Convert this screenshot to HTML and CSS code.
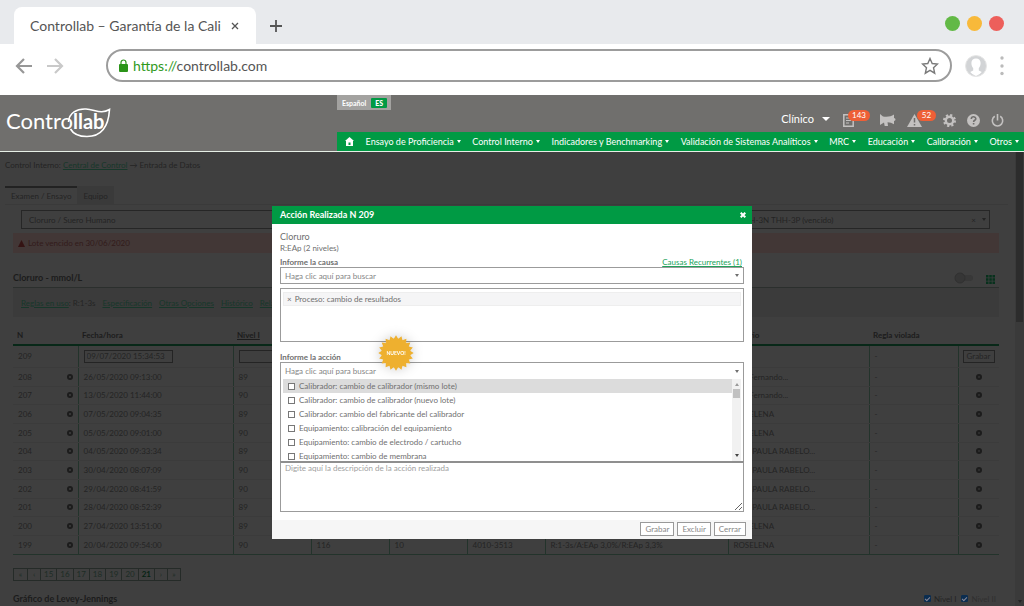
FILE: index.html
```html
<!DOCTYPE html>
<html lang="es">
<head>
<meta charset="utf-8">
<title>Controllab – Garantía de la Calidad</title>
<link rel="stylesheet" href="styles.css">
</head>
<body>
<div class="tabstrip">
  <div class="tab"><span>Controllab – Garantía de la Cali</span><button class="plain" aria-label="Cerrar pestaña"><svg width="8" height="8" viewBox="0 0 8 8"><path d="M1 1l6 6M7 1l-6 6" stroke="#555" stroke-width="1.3"/></svg></button></div>
  <button class="plain newtab" aria-label="Nueva pestaña"><svg width="12" height="12" viewBox="0 0 12 12"><path d="M6 0v12M0 6h12" stroke="#555" stroke-width="1.8"/></svg></button>
  <div class="lights"><i class="go"></i><i class="mid"></i><i class="stop"></i></div>
</div>
<div class="toolbar">
  <button class="plain" aria-label="Atrás"><svg width="17" height="16" viewBox="0 0 17 16"><path d="M9 1L2 8l7 7M2 8h15" fill="none" stroke="#979797" stroke-width="2.2"/></svg></button>
  <button class="plain" aria-label="Adelante"><svg width="17" height="16" viewBox="0 0 17 16"><path d="M8 1l7 7-7 7M15 8H0" fill="none" stroke="#c9c9c9" stroke-width="2.2"/></svg></button>
  <div class="address">
    <svg width="9" height="13" viewBox="0 0 9 13"><rect y="5" width="9" height="8" rx="1" fill="#2b9419"/><path d="M2 6V3.500a2.500 2.500 0 0 1 5 0V6" fill="none" stroke="#2b9419" stroke-width="1.200"/></svg>
    <span class="url"><b>https://</b>controllab.com</span>
    <svg width="18" height="18" viewBox="0 0 18 18"><path d="M9 1.500l2.200 5 5.300.5-4 3.700 1.200 5.500L9 13.400l-4.700 2.800 1.200-5.500-4-3.700 5.300-.5z" fill="none" stroke="#7a7a7a" stroke-width="1.400"/></svg>
  </div>
  <svg class="avatar" width="22" height="22" viewBox="0 0 22 22"><circle cx="11" cy="11" r="10.500" fill="#d2d4d6" stroke="#e6e6e6"/><path d="M11 3.500c3 0 4.600 2 4.600 4.600 0 2.500-.8 4-1.800 5v2.500l3 1.500A10 10 0 0 1 11 21a10 10 0 0 1-5.800-3.900l3-1.500v-2.500c-1-1-1.800-2.500-1.800-5C6.400 5.500 8 3.500 11 3.500z" fill="#fff"/></svg>
  <svg width="4" height="20" viewBox="0 0 4 20" fill="#bbb"><circle cx="2" cy="2" r="1.700"/><circle cx="2" cy="10" r="1.700"/><circle cx="2" cy="17.500" r="1.700"/></svg>
</div>

<header class="site">
  <svg class="logo" width="116" height="42" viewBox="0 101 116 42" role="img" aria-label="Controllab">
    <text x="6" y="129" class="logo-text">Contro<tspan class="logo-bold">llab</tspan></text>
    <path d="M68.500 122C69 113 77 108.500 86 109C95 109.500 101 114.500 109.500 109.500C108.500 126 102 136.500 87 136.500C79 136.500 73 133.500 70.500 129" fill="none" stroke="#fff" stroke-width="1.600"/>
  </svg>
  <div class="site-right">
    <div class="lang"><span>Español</span><b>ES</b></div>
    <div class="tools">
      <button class="plain clinic">Clínico <i class="caret big"></i></button>
      <span class="note doc"><svg width="11" height="13" viewBox="0 0 11 13"><path d="M.8.800h9.400v11.400H.8z" fill="none" stroke="#c3c1c0" stroke-width="1.500"/><path d="M3 4h5M3 6.500h5M3 9h3" stroke="#c3c1c0"/></svg><em>143</em></span>
      <svg width="16" height="14" viewBox="0 0 16 14" fill="#c3c1c0"><path d="M0 1l3 2.500C8 4 11 3.500 14 1.500V5c2 .5 2 2.500 0 3v3.200C12 10 10 9.500 7.500 9.300L8 13H4.700L4 9.500 0 12z"/></svg>
      <span class="note warn"><svg width="15" height="13" viewBox="0 0 15 13"><path d="M7.500 0L15 13H0z" fill="#c3c1c0"/><path d="M7.500 4v4.500M7.500 10v1.500" stroke="#706f6d" stroke-width="1.500"/></svg><em>52</em></span>
      <svg width="13" height="13" viewBox="0 0 13 13"><circle cx="6.500" cy="6.500" r="3.700" fill="none" stroke="#c3c1c0" stroke-width="2.400"/><circle cx="6.500" cy="6.500" r="5.500" fill="none" stroke="#c3c1c0" stroke-width="2" stroke-dasharray="2.200 2.120"/></svg>
      <svg width="13" height="13" viewBox="0 0 13 13"><circle cx="6.500" cy="6.500" r="6.500" fill="#c3c1c0"/><path d="M4.300 5c0-3 4.500-2.800 4.500-.3 0 1.600-2.200 1.500-2.200 3.200M6.600 9v1.600" fill="none" stroke="#706f6d" stroke-width="1.600"/></svg>
      <svg width="13" height="13" viewBox="0 0 13 13"><path d="M3.800 2.300a5.200 5.200 0 1 0 5.400 0M6.500 0v6.500" fill="none" stroke="#c3c1c0" stroke-width="1.600"/></svg>
    </div>
    <nav>
      <a href="#" aria-label="Inicio"><svg width="9" height="9" viewBox="0 0 9 9"><path d="M4.500 0L9 4H8v5H1V4H0z" fill="#fff"/><path d="M3.500 5.500h2V8h-2z" fill="#009a44"/></svg></a>
      <a href="#">Ensayo de Proficiencia<i class="caret"></i></a>
      <a href="#">Control Interno<i class="caret"></i></a>
      <a href="#">Indicadores y Benchmarking<i class="caret"></i></a>
      <a href="#">Validación de Sistemas Analíticos<i class="caret"></i></a>
      <a href="#">MRC<i class="caret"></i></a>
      <a href="#">Educación<i class="caret"></i></a>
      <a href="#">Calibración<i class="caret"></i></a>
      <a href="#">Otros<i class="caret"></i></a>
    </nav>
  </div>
</header>

<main>
  <div class="page">
    <div class="crumbs">Control Interno: <a href="#">Central de Control</a> → Entrada de Datos</div>
    <div class="tabs"><button class="on">Examen / Ensayo</button><button>Equipo</button></div>
    <div class="filters">
      <select aria-label="Examen"><option>Cloruro / Suero Humano</option></select>
      <div class="lot"><select aria-label="Lote"><option>THH-3N THH-3P (vencido)</option></select><span>×</span><i class="caret"></i></div>
    </div>
    <div class="content">
      <div class="alert"><svg width="7" height="7" viewBox="0 0 7 7"><path d="M3.500 0L7 7H0z" fill="#341313"/></svg>Lote vencido en 30/06/2020</div>
      <div class="title"><h2>Cloruro - mmol/L</h2>
        <svg width="19" height="12" viewBox="0 0 19 12"><rect x="6" y="3" width="13" height="6" rx="3" fill="#383838"/><circle cx="6" cy="6" r="5" fill="#363636" stroke="#313131"/></svg>
        <svg width="9" height="9" viewBox="0 0 9 9" fill="#07311c"><path d="M0 0h2.500v2.500H0zM3.300 0h2.500v2.500H3.300zM6.500 0H9v2.500H6.500zM0 3.300h2.500v2.500H0zM3.300 3.300h2.500v2.500H3.300zM6.500 3.300H9v2.500H6.500zM0 6.500h2.500V9H0zM3.300 6.500h2.500V9H3.300zM6.500 6.500H9V9H6.500z"/></svg>
      </div>
      <div class="links"><span><a href="#">Reglas en uso</a>: R:1-3s</span><a href="#">Especificación</a><a href="#">Otras Opciones</a><a href="#">Histórico</a><a href="#">Relatorio</a></div>
      <table>
        <colgroup><col class="c1"><col class="c2"><col class="c3"><col class="c3"><col class="c3"><col class="c3"><col class="c4"><col class="c5"><col class="c6"><col class="c7"></colgroup>
        <thead><tr><th>N</th><th>Fecha/hora</th><th><u>Nivel I</u></th><th></th><th></th><th></th><th></th><th>Usuario</th><th>Regla violada</th><th></th></tr></thead>
        <tbody>
          <tr class="edit"><td>209</td><td><input class="date" aria-label="Fecha/hora" value="09/07/2020 15:34:53"></td><td><input class="level" aria-label="Nivel I"></td><td></td><td></td><td></td><td></td><td></td><td>-</td><td class="act"><button>Grabar</button></td></tr>
          <tr><td><p>208<i class="dot"></i></p></td><td>26/05/2020 09:13:00</td><td>89</td><td></td><td></td><td></td><td></td><td>Luis Fernando...</td><td>-</td><td class="act"><i class="dot ok"></i></td></tr>
          <tr><td><p>207<i class="dot"></i></p></td><td>13/05/2020 11:44:00</td><td>90</td><td></td><td></td><td></td><td></td><td>Luis Fernando...</td><td>-</td><td class="act"><i class="dot ok"></i></td></tr>
          <tr><td><p>206<i class="dot"></i></p></td><td>07/05/2020 09:04:35</td><td>89</td><td></td><td></td><td></td><td></td><td>ROSELENA</td><td>-</td><td class="act"><i class="dot ok"></i></td></tr>
          <tr><td><p>205<i class="dot"></i></p></td><td>05/05/2020 09:01:00</td><td>90</td><td></td><td></td><td></td><td></td><td>ROSELENA</td><td>-</td><td class="act"><i class="dot ok"></i></td></tr>
          <tr><td><p>204<i class="dot"></i></p></td><td>04/05/2020 09:33:34</td><td>89</td><td></td><td></td><td></td><td></td><td>ANA PAULA RABELO...</td><td>-</td><td class="act"><i class="dot ok"></i></td></tr>
          <tr><td><p>203<i class="dot"></i></p></td><td>30/04/2020 08:07:09</td><td>90</td><td></td><td></td><td></td><td></td><td>ANA PAULA RABELO...</td><td>-</td><td class="act"><i class="dot ok"></i></td></tr>
          <tr><td><p>202<i class="dot"></i></p></td><td>29/04/2020 08:41:59</td><td>90</td><td></td><td></td><td></td><td></td><td>ANA PAULA RABELO...</td><td>-</td><td class="act"><i class="dot ok"></i></td></tr>
          <tr><td><p>201<i class="dot"></i></p></td><td>28/04/2020 08:52:39</td><td>89</td><td></td><td></td><td></td><td></td><td>ANA PAULA RABELO...</td><td>-</td><td class="act"><i class="dot ok"></i></td></tr>
          <tr><td><p>200<i class="dot"></i></p></td><td>27/04/2020 13:51:00</td><td>89</td><td></td><td></td><td></td><td></td><td>ROSELENA</td><td>-</td><td class="act"><i class="dot ok"></i></td></tr>
          <tr><td><p>199<i class="dot"></i></p></td><td>20/04/2020 09:54:00</td><td>90</td><td>116</td><td>10</td><td>4010-3513</td><td>R:1-3s/A:EAp 3,0%/R:EAp 3,3%</td><td>ROSELENA</td><td>-</td><td class="act"><i class="dot ok"></i></td></tr>
        </tbody>
      </table>
      <div class="pager"><a href="#">«</a><a href="#">‹</a><a href="#">15</a><a href="#">16</a><a href="#">17</a><a href="#">18</a><a href="#">19</a><a href="#">20</a><a href="#" class="cur">21</a><a href="#">›</a><a href="#">»</a></div>
      <div class="chart"><h2>Gráfico de Levey-Jennings</h2><label><input type="checkbox" checked>Nivel I</label><label class="dim"><input type="checkbox" checked>Nivel II</label></div>
    </div>
  </div>
  <div class="pagebar"><i></i><i class="caret"></i></div>

  <section class="modal" role="dialog" aria-label="Acción Realizada N 209">
    <div class="modal-head"><h1>Acción Realizada N 209</h1><button class="plain" aria-label="Cerrar"><svg width="6" height="6" viewBox="0 0 6 6"><path d="M.7.700l4.600 4.600M5.300.700L.7 5.300" stroke="#fff" stroke-width="2"/></svg></button></div>
    <div class="modal-body">
      <h3>Cloruro</h3>
      <p class="sub">R:EAp (2 niveles)</p>
      <div class="row"><label for="causa">Informe la causa</label><a href="#">Causas Recurrentes (1)</a></div>
      <div class="combo"><input id="causa" placeholder="Haga clic aquí para buscar"><i class="caret"></i></div>
      <div class="chosen"><div><span>×</span>Proceso: cambio de resultados</div></div>
      <div class="row second"><label for="accion">Informe la acción</label></div>
      <div class="drop">
        <div class="combo open"><input id="accion" placeholder="Haga clic aquí para buscar"><i class="caret"></i></div>
        <div class="listwrap">
          <div class="list">
            <label class="hl"><input type="checkbox">Calibrador: cambio de calibrador (mismo lote)</label>
            <label><input type="checkbox">Calibrador: cambio de calibrador (nuevo lote)</label>
            <label><input type="checkbox">Calibrador: cambio del fabricante del calibrador</label>
            <label><input type="checkbox">Equipamiento: calibración del equipamiento</label>
            <label><input type="checkbox">Equipamiento: cambio de electrodo / cartucho</label>
            <label><input type="checkbox">Equipamiento: cambio de membrana</label>
          </div>
          <div class="scroll"><i class="caret up"></i><i class="thumb"></i><i class="caret down"></i></div>
        </div>
      </div>
      <textarea aria-label="Descripción" placeholder="Digite aquí la descripción de la acción realizada"></textarea>
    </div>
    <div class="modal-foot"><button>Grabar</button><button>Excluir</button><button>Cerrar</button></div>
    <svg class="seal" width="36" height="36" viewBox="-18 -18 36 36"><defs><path id="spikes" d="M-2.300-14L0-17.700 2.300-14zM14-2.300L17.700 0 14 2.300zM-2.300 14L0 17.700 2.300 14zM-14-2.300L-17.700 0-14 2.300z"/></defs><g fill="#eeb02f"><circle r="14.500"/><use href="#spikes"/><use href="#spikes" transform="rotate(18)"/><use href="#spikes" transform="rotate(36)"/><use href="#spikes" transform="rotate(54)"/><use href="#spikes" transform="rotate(72)"/></g><text class="seal-text" text-anchor="middle" y="2">NUEVO!</text></svg>
  </section>
</main>
</body>
</html>
```
FILE: styles.css
```css
* { box-sizing: border-box; }
html, body { height: 100%; }
body { margin: 0; display: flex; flex-direction: column; overflow: hidden; background: #fff; font: 8px/10px Lato, sans-serif; color: #777; }
button, input, select, textarea { font: inherit; color: inherit; margin: 0; border-radius: 0; }
h1, h2, h3, p { margin: 0; font-size: inherit; font-weight: 400; }
svg { display: block; flex: none; }
i, em { font-style: normal; }
.plain { border: 0; background: none; padding: 0; display: flex; align-items: center; }
.caret { display: inline-block; flex: none; border: 2px solid transparent; border-top: 3px solid currentColor; border-bottom: 0; }
.caret.big { border-width: 4px 4px 0; }

.tabstrip { flex: none; height: 44px; display: flex; align-items: center; background: #e8eaed; padding: 7px 20px 0 14px; }
.tab { align-self: stretch; width: 242px; padding: 0 17px 0 16px; display: flex; align-items: center; justify-content: space-between; background: #fff; border-radius: 8px 8px 0 0; font-size: 14px; line-height: 18px; color: #555; }
.newtab { margin-left: 14px; }
.lights { margin-left: auto; display: flex; gap: 7px; padding-bottom: 4px; }
.lights i { width: 15px; height: 15px; border-radius: 50%; }
.go { background: #62b946; } .mid { background: #f8b93a; } .stop { background: #ed5f5b; }
.toolbar { flex: none; height: 51px; padding: 0 20px 8px 15px; display: flex; align-items: center; gap: 15px; }
.address { flex: 1; margin: 0 -2px 0 27px; height: 33px; padding: 0 11px; display: flex; align-items: center; border: 2px solid #9c9c9c; border-radius: 17px; }
.avatar { margin-right: -2px; }
.url { flex: 1; margin-left: 5px; font-size: 14px; line-height: 18px; color: #555; }
.url b { font-weight: 400; color: #2f9a1d; }

.site { flex: none; height: 57px; display: grid; grid-template-columns: 337px 1fr; background: #706f6d; border-bottom: 1px solid #e6efe6; }
.logo { margin-top: 6px; }
.logo-text { font-size: 22px; fill: #fff; }
.logo-bold { font-size: 20px; font-weight: 700; }
.site-right { display: grid; grid-template-columns: auto 1fr; grid-template-rows: 1fr 19px; color: #fff; }
.lang { height: 15px; padding: 0 4px 0 5px; display: flex; align-items: center; gap: 5px; background: #a3a2a0; font-size: 7px; font-weight: 700; }
.lang b { background: #009a44; padding: 0 4px; border-radius: 1px; }
.tools { display: flex; justify-content: flex-end; align-items: center; gap: 11px; padding: 13px 20px 0 0; }
.clinic { font-size: 11px; line-height: 14px; gap: 8px; margin-right: 2px; padding-bottom: 3px; }
.note { position: relative; }
.doc { margin-right: 15px; } .warn { margin-right: 10px; }
.note em { position: absolute; left: 5px; top: -4px; min-width: 19px; padding: 0 4px; border-radius: 6px; background: #ee5f36; line-height: 11px; text-align: center; }
.warn em { left: 10px; }
nav { grid-column: 1 / -1; display: flex; align-items: center; justify-content: space-between; padding: 0 5px 0 8px; background: #009a44; font-size: 9px; }
nav a { color: #fff; text-decoration: none; display: flex; align-items: center; gap: 3px; white-space: nowrap; }

main { flex: 1; min-height: 0; position: relative; display: flex; background: #3f3f3f; color: #242424; overflow: hidden; }
.page { flex: 1; }
.page a { color: #17372a; }
.crumbs { padding: 8px 5px 0; }
.tabs { display: flex; margin: 16px 7px 0 5px; border-bottom: 1px solid #3a3a3a; }
.tabs button { height: 18px; border: 0; border-top: 2px solid transparent; background: #3a3a3a; padding: 0 6px; }
.tabs .on { border-top-color: #222; background: none; }
.filters { display: grid; grid-template-columns: 1fr 1fr; gap: 20px; padding: 5px 25px 0 21px; }
.filters select { appearance: none; border: 1px solid #262626; background: none; height: 19px; padding: 0 7px; width: 100%; }
.lot { display: flex; align-items: center; gap: 6px; border: 1px solid #262626; padding-right: 3px; height: 19px; }
.filters .lot select { border: 0; flex: 1; padding: 0 0 0 222px; }
.content { padding: 4px 16px 0 13px; }
.alert { height: 20px; padding: 0 5px; display: flex; align-items: center; gap: 3px; background: #423736; color: #321b1b; }
.title { height: 35px; display: flex; align-items: flex-end; gap: 13px; padding: 0 4px 3px 0; border-bottom: 1px solid #2b2f2d; }
.title h2 { flex: 1; }
h2 { font-size: 9px; line-height: 12px; font-weight: 700; color: #1c1c1c; }
.links { height: 29px; display: flex; align-items: center; gap: 7px; padding: 0 8px; background: #3b3b3b; }
table { width: 100%; table-layout: fixed; border-collapse: collapse; }
.c1 { width: 65px; } .c2 { width: 155px; } .c3 { width: 78px; } .c4 { width: 183px; } .c5 { width: 141px; } .c6 { width: 89px; }
th { height: 28px; padding: 8px 4px 0; text-align: left; font-weight: 700; color: #1c1c1c; border-bottom: 2px solid #082818; }
td { height: 19px; padding: 0 5px; white-space: nowrap; border-left: 1px solid #23332b; border-bottom: 1px solid #3b3b3b; }
tr:nth-child(3n) td { height: 18px; }
td:first-child { border-left: 0; }
tr.edit td { height: 22px; }
tr:last-child td { border-bottom-color: #23332b; }
td p { display: flex; align-items: center; justify-content: space-between; }
td.act { padding: 0 4px; }
td input { display: block; border: 1px solid #242424; background: none; height: 13px; padding: 0 2px; width: 70px; }
td .date { width: 89px; }
td button { display: block; width: 32px; height: 13px; padding: 0; line-height: 9px; border: 1px solid #242424; background: none; }
.dot { display: block; width: 6px; height: 6px; border-radius: 50%; border: 2px solid #1c1c1c; }
.ok { margin: 0 auto; background: #333; }
.pager { display: inline-flex; margin-top: 13px; border: 1px solid #252b28; }
.pager a { min-width: 13px; padding: 0 3px; line-height: 11px; text-align: center; text-decoration: none; color: #1d2c25; }
.pager a + a { border-left: 1px solid #252b28; }
.pager .cur { font-weight: 700; color: #062313; }
.chart { display: flex; align-items: center; gap: 5px; margin-top: 12px; padding-right: 3px; }
.chart h2 { flex: 1; }
.chart label { display: flex; align-items: center; gap: 3px; }
.chart input { appearance: none; width: 7px; height: 7px; background: #0b2d50; border: 1px solid #0b2d50; border-radius: 1px; display: grid; place-items: center; }
.chart input::after { content: ""; width: 2px; height: 4px; border: solid #889; border-width: 0 1px 1px 0; transform: rotate(45deg); }
.dim { color: #303030; }
.pagebar { width: 9px; background: #3a3a3a; display: flex; flex-direction: column; justify-content: space-between; align-items: center; padding-bottom: 3px; }
.pagebar i:first-child { width: 7px; height: 170px; background: #2c2c2c; }

.modal { position: absolute; top: 54px; left: 0; right: 0; margin: 0 auto; width: 480px; background: #fff; color: #6f6f6f; }
.modal-head { height: 18px; padding: 0 6px 0 8px; display: flex; align-items: center; justify-content: space-between; background: #009a44; color: #fff; }
.modal-head h1 { font-size: 9px; font-weight: 700; }
.modal-body { padding: 7px 8px 8px; }
h3 { font-size: 9px; line-height: 12px; }
.row { display: flex; justify-content: space-between; align-items: flex-end; margin-top: 5px; padding-right: 2px; line-height: 9px; }
.row label { font-weight: 700; }
.row a { color: #20a35a; }
.combo { height: 17px; display: flex; align-items: center; border: 1px solid #9b9b9b; padding-right: 4px; }
.combo.open { border: 0; height: 16px; }
.combo input { flex: 1; border: 0; outline: 0; background: none; padding: 0 4px; height: 14px; }
.combo input::placeholder { color: #858585; opacity: 1; }
.chosen { height: 54px; margin-top: 4px; border: 1px solid #9b9b9b; padding: 3px 2px; }
.chosen div { height: 14px; border: 1px solid #eee; background: #f5f5f6; line-height: 12px; padding-left: 3px; }
.chosen span { margin-right: 3px; }
.row.second { margin-top: 11px; }
.drop { border: 1px solid #9b9b9b; border-bottom: 0; }
.listwrap { display: flex; padding: 0 2px; height: 82px; }
.list { flex: 1; overflow: hidden; }
.list label { height: 14px; display: flex; align-items: center; gap: 4px; padding-left: 5px; }
.list .hl { background: #dcdcdc; }
.list input { appearance: none; width: 7px; height: 7px; border: 1px solid #777; background: #fff; }
.scroll { width: 9px; background: #f1f1f1; display: flex; flex-direction: column; align-items: center; padding: 4px 0 4px; }
.up { transform: rotate(180deg); color: #999; }
.thumb { width: 7px; height: 9px; margin-top: 3px; background: #c1c1c1; }
.down { margin-top: auto; color: #444; }
textarea { display: block; width: 100%; height: 51px; border: 1px solid #9b9b9b; border-top: 2px solid #8f8f8f; padding: 0 4px; background: #fff; }
textarea::placeholder { color: #a0a0a0; }
.modal-foot { height: 19px; display: flex; justify-content: flex-end; gap: 3px; padding: 2px 6px 0; background: #f6f6f6; }
.modal-foot button { height: 14px; border: 1px solid #999; background: #fff; padding: 0 4px; color: #888; line-height: 10px; }
.seal { position: absolute; left: 106px; top: 129px; filter: drop-shadow(0 0 6px #0003); }
.seal-text { font-size: 5px; font-weight: 700; fill: #fff; }
```
